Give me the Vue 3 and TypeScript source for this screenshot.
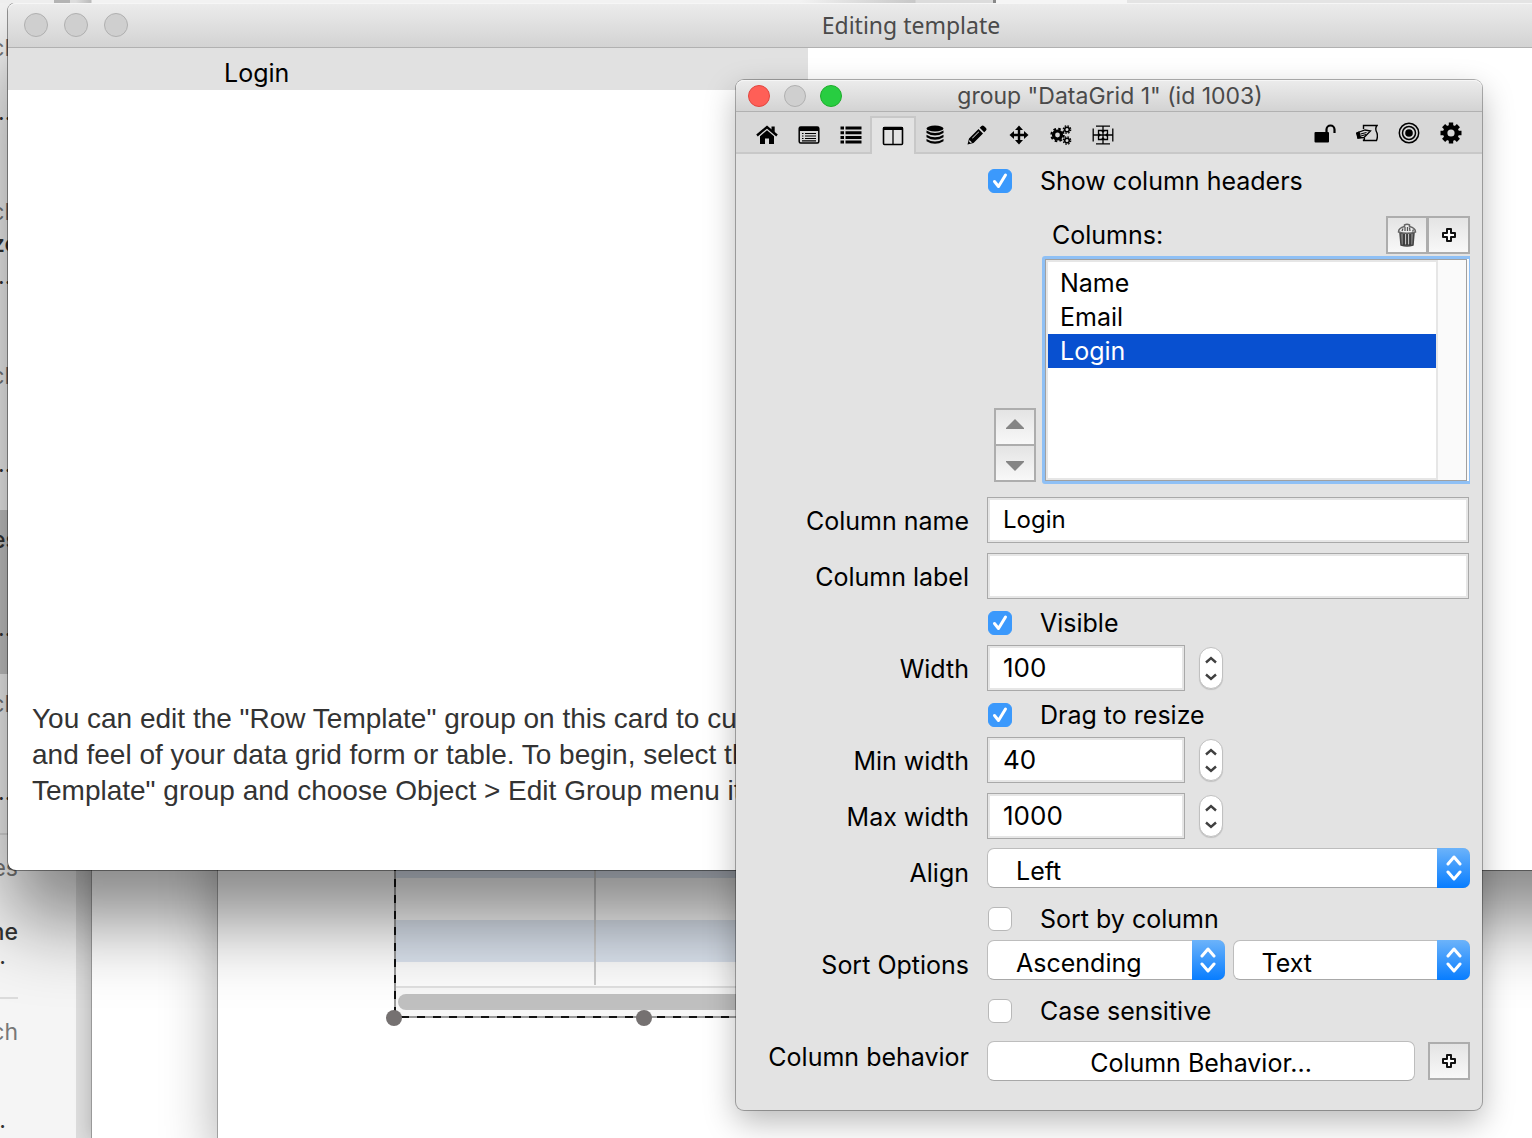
<script setup lang="ts">
import { ref } from 'vue'

interface ListItem {
  lines: string[]
  strong?: number
  selected?: boolean
}

const listItems: ListItem[] = [
  { lines: ['Research', '', '...'] },
  { lines: ['Research', 'Resize', '...'], strong: 1 },
  { lines: ['Research', '', '', '...'] },
  { lines: ['Properties', '', '', '...'], strong: 0, selected: true },
  { lines: ['Research', '', '', '...'] },
  { lines: ['Properties', '', 'Name', '... '], strong: 2 },
  { lines: ['Research', '', '', '... '] },
]

const tabs: string[] = ['home', 'card', 'list', 'columns', 'data', 'pencil', 'move', 'gears', 'geometry']
const tools: string[] = ['lock', 'script', 'target', 'gear']
const activeTab = ref('columns')

const columns = ref(['Name', 'Email', 'Login'])
const selectedColumn = ref('Login')
const showHeaders = ref(true)
const columnName = ref('Login')
const columnLabel = ref('')
const visible = ref(true)
const resizable = ref(true)
const width = ref(100)
const minWidth = ref(40)
const maxWidth = ref(1000)
const align = ref('Left')
const sortBy = ref(false)
const order = ref('Ascending')
const sortType = ref('Text')
const caseSensitive = ref(false)
</script>

<template>
  <main class="desktop">
    <div class="top-strip"></div>

    <aside class="mail-window">
      <ul class="mail-list">
        <li v-for="(item, i) in listItems" :key="i" class="mail-item" :class="{ selected: item.selected }">
          <span
            v-for="(line, j) in item.lines"
            :key="j"
            class="mail-line"
            :class="{ strong: item.strong === j, dots: line.startsWith('.'), short: line.endsWith(' ') }"
          >{{ line }}</span>
        </li>
      </ul>
    </aside>
    <div class="plain-window"></div>
    <div class="stack-window"></div>

    <section class="data-grid">
      <div class="grid-row tinted"></div>
      <div class="grid-row"></div>
      <div class="grid-row tinted"></div>
      <div class="grid-row last"></div>
      <div class="grid-scroll"><div class="grid-thumb"></div></div>
      <i class="grid-divider"></i>
      <i class="edge-left"></i>
      <i class="edge-bottom"></i>
      <i class="handle handle-a"></i>
      <i class="handle handle-b"></i>
    </section>

    <section class="template-window">
      <header class="title-bar large">
        <div class="lights">
          <i class="light"></i><i class="light"></i><i class="light"></i>
        </div>
        <h1 class="title template-title">Editing template</h1>
      </header>
      <div class="column-header">Login</div>
      <p class="hint">
        You can edit the "Row Template" group on this card to customize the look<br />
        and feel of your data grid form or table. To begin, select the "Row<br />
        Template" group and choose Object &gt; Edit Group menu item.
      </p>
    </section>

    <section class="inspector">
      <header class="title-bar">
        <div class="lights">
          <i class="light close"></i><i class="light"></i><i class="light zoom"></i>
        </div>
        <h2 class="title">group "DataGrid 1" (id 1003)</h2>
      </header>

      <nav class="toolbar">
        <div class="tabs">
          <button
            v-for="tab in tabs"
            :key="tab"
            type="button"
            class="tab"
            :class="{ active: tab === activeTab }"
            :aria-label="tab"
            @click="activeTab = tab"
          >
            <svg viewBox="0 0 22 22" class="icon">
              <g v-if="tab === 'home'">
                <path d="M1 11.500 L11 3 L21 11.500" fill="none" stroke="#000" stroke-width="2.400" />
                <path d="M15.500 2.500h3.200v6l-3.200-2.600z" />
                <path d="M4 12.200 L11 6.200 L18 12.200 V20 H13 V14.500 H9 V20 H4z" />
              </g>
              <g v-else-if="tab === 'card'">
                <rect x="1.200" y="3" width="19.600" height="16" rx="1.500" fill="none" stroke="#000" stroke-width="1.500" />
                <path d="M1 3h20v4H1z" />
                <path d="M4 9.500h1.500M4 12h1.500M4 14.500h1.500M7 9.500h11M7 12h11M7 14.500h11M4 16.800h14" stroke="#000" stroke-width="1.200" />
              </g>
              <g v-else-if="tab === 'list'">
                <path d="M.5 4h3.500M.5 8.700h3.500M.5 13.400h3.500M.5 18h3.500M5.500 4h16M5.500 8.700h16M5.500 13.400h16M5.500 18h16" stroke="#000" stroke-width="3" />
              </g>
              <g v-else-if="tab === 'columns'">
                <rect x="1.500" y="2.500" width="19" height="17" rx="1" fill="none" stroke="#000" stroke-width="1.600" />
                <path d="M1 2h20v3H1z" />
                <path d="M11 3v16" stroke="#000" stroke-width="1.300" />
              </g>
              <g v-else-if="tab === 'data'">
                <ellipse cx="11" cy="4.500" rx="8.500" ry="3" />
                <path d="M2.500 6.500q8.500 5 17 0v2.500q-8.500 5-17 0zM2.500 10.800q8.500 5 17 0v2.500q-8.500 5-17 0zM2.500 15q8.500 5 17 0v2.300q-8.500 5-17 0z" />
              </g>
              <g v-else-if="tab === 'pencil'">
                <path fill-rule="evenodd" d="M1.500 20.500 L3 14.500 L12.500 5 L17 9.500 L7.500 19z M3 17.500l1.600 1.600 1.400-.5-2.500-2.500zM6 14l6.500-6.500.6.600-6.500 6.500z" />
                <path d="M13.700 3.800 L15.500 2q1.200-1 2.400 0L20 4.100q1.200 1.200 0 2.400L18.200 8.300z" />
              </g>
              <g v-else-if="tab === 'move'">
                <path d="M11 4v14M4 11h14" stroke="#000" stroke-width="2.400" />
                <path d="M11 1.500l4 4.500H7zM11 20.500l4-4.500H7zM1.500 11L6 7v8zM20.500 11L16 7v8z" />
              </g>
              <g v-else-if="tab === 'gears'">
                <circle cx="7.500" cy="11" r="4" fill="none" stroke="#000" stroke-width="3.200" />
                <circle cx="7.500" cy="11" r="6.200" fill="none" stroke="#000" stroke-width="2" stroke-dasharray="2.600 2.270" />
                <circle cx="17" cy="5.500" r="2.300" fill="none" stroke="#000" stroke-width="1.600" />
                <circle cx="17" cy="5.500" r="3.700" fill="none" stroke="#000" stroke-width="1.300" stroke-dasharray="1.600 1.306" />
                <circle cx="17" cy="16.500" r="2.300" fill="none" stroke="#000" stroke-width="1.600" />
                <circle cx="17" cy="16.500" r="3.700" fill="none" stroke="#000" stroke-width="1.300" stroke-dasharray="1.600 1.306" />
              </g>
              <g v-else>
                <path d="M1.200 4.500v13M20.800 4.500v13M4 2.200h14M4 19.800h14M6.500 6.500h9v9h-9zM1 11h20M11 2.500v17" fill="none" stroke="#000" stroke-width="1.300" />
                <path d="M6.500 8.800v4.400l2.500-2.200zM15.500 8.800v4.400l-2.500-2.200zM8.800 6.500h4.400l-2.200 2.500zM8.800 15.500h4.400l-2.200-2.500z" />
              </g>
            </svg>
          </button>
        </div>
        <div class="tools">
          <button v-for="tool in tools" :key="tool" type="button" class="tool" :aria-label="tool">
            <svg viewBox="0 0 22 22" class="icon">
              <g v-if="tool === 'lock'">
                <rect x=".5" y="10" width="14.500" height="10.500" rx="1" />
                <path d="M12.500 11V7.500a4 4 0 0 1 8 0V11" fill="none" stroke="#000" stroke-width="2.200" />
              </g>
              <g v-else-if="tool === 'script'">
                <path d="M7.500 7V3.500H21q-2.500 3 0 7.500 1 4-.5 7.500H7q2-1 1.200-2.500" fill="none" stroke="#000" stroke-width="1.400" />
                <path d="M2 10.500l7-2.500 5.500 1-3.500 3.500-3 3-6 .5z" fill="#d8d8d8" stroke="#000" stroke-width="1.300" />
                <path d="M.5 11l2.500-1 1.500 5.500-2.500.5zM4.500 12l6-1.500M5 14l5-1.500" stroke="#000" stroke-width="1.200" />
              </g>
              <g v-else-if="tool === 'target'">
                <circle cx="11" cy="11" r="9.700" fill="none" stroke="#000" stroke-width="1.500" />
                <circle cx="11" cy="11" r="6.500" fill="none" stroke="#000" stroke-width="1.500" />
                <circle cx="11" cy="11" r="3.800" />
              </g>
              <g v-else>
                <circle cx="11" cy="11" r="5.800" fill="none" stroke="#000" stroke-width="4.400" />
                <path d="M11 .5v4M11 17.500v4M.5 11h4M17.500 11h4M3.600 3.600l3 3M15.400 15.400l3 3M3.600 18.400l3-3M15.400 6.600l3-3" stroke="#000" stroke-width="4.400" />
              </g>
            </svg>
          </button>
        </div>
      </nav>

      <form class="form" @submit.prevent>
        <div class="check-row">
          <label class="check">
            <span class="box">
              <input v-model="showHeaders" type="checkbox" />
              <svg v-if="showHeaders" viewBox="0 0 24 24"><path d="M6.500 12.500l4 5 7-11.500" /></svg>
            </span>
            Show column headers
          </label>
        </div>

        <div class="columns-block">
          <div class="arrows">
            <button type="button" class="mini" aria-label="Move up">
              <svg viewBox="0 0 18 10" class="arrow"><path d="M9 0l9 9v1H0V9z" /></svg>
            </button>
            <button type="button" class="mini" aria-label="Move down">
              <svg viewBox="0 0 18 10" class="arrow"><path d="M9 10l9-9V0H0v1z" /></svg>
            </button>
          </div>
          <div class="columns-main">
            <div class="columns-head">
              <label for="columns">Columns:</label>
              <div class="pair">
                <button type="button" class="mini" aria-label="Delete column">
                  <svg viewBox="0 0 20 24" class="trash">
                    <path d="M3 10h14l-1 12q-6 2-12 0z" fill="#777" stroke="#444" stroke-width="1.500" />
                    <path d="M7 11v11M10 11v11M13 11v11" stroke="#222" stroke-width="1.300" />
                    <path d="M8.600 11v10M11.600 11v10" stroke="#ccc" />
                    <path d="M1.500 9q0-4 6-5.500V2q2.500-1.500 5 0v1.500q6 1.500 6 5.500-8.500 2.500-17 0z" fill="#eee" stroke="#666" stroke-width="1.500" />
                    <path d="M8 8V4M10.500 8V4M13 8l-.5-3.500M5 8l1-2.500M15.500 8.500l1-2" stroke="#555" stroke-width="1.300" />
                  </svg>
                </button>
                <button type="button" class="mini" aria-label="Add column">
                  <svg viewBox="0 0 14 14" class="plus"><path d="M5 1h4v4h4v4H9v4H5V9H1V5h4z" /></svg>
                </button>
              </div>
            </div>
            <div class="list-frame">
              <select id="columns" v-model="selectedColumn" class="column-list" size="6">
                <option v-for="c in columns" :key="c" :value="c">{{ c }}</option>
              </select>
              <div class="list-track"></div>
            </div>
          </div>
        </div>

        <div class="row spaced">
          <label for="col-name">Column name</label>
          <input id="col-name" v-model="columnName" class="field" type="text" />
        </div>
        <div class="row">
          <label for="col-label">Column label</label>
          <input id="col-label" v-model="columnLabel" class="field" type="text" />
        </div>
        <div class="check-row">
          <label class="check">
            <span class="box">
              <input v-model="visible" type="checkbox" />
              <svg v-if="visible" viewBox="0 0 24 24"><path d="M6.500 12.500l4 5 7-11.500" /></svg>
            </span>
            Visible
          </label>
        </div>
        <div class="row">
          <label for="width">Width</label>
          <div class="number">
            <input id="width" v-model="width" class="field" type="text" />
            <span class="stepper">
              <button type="button" aria-label="Increase width" @click="width++"><svg viewBox="0 0 12 8"><path d="M1 6.500l5-4.500 5 4.500" /></svg></button>
              <button type="button" aria-label="Decrease width" @click="width--"><svg viewBox="0 0 12 8"><path d="M1 1.500l5 4.500 5-4.500" /></svg></button>
            </span>
          </div>
        </div>
        <div class="check-row">
          <label class="check">
            <span class="box">
              <input v-model="resizable" type="checkbox" />
              <svg v-if="resizable" viewBox="0 0 24 24"><path d="M6.500 12.500l4 5 7-11.500" /></svg>
            </span>
            Drag to resize
          </label>
        </div>
        <div class="row spaced">
          <label for="min-width">Min width</label>
          <div class="number">
            <input id="min-width" v-model="minWidth" class="field" type="text" />
            <span class="stepper">
              <button type="button" aria-label="Increase min width" @click="minWidth++"><svg viewBox="0 0 12 8"><path d="M1 6.500l5-4.500 5 4.500" /></svg></button>
              <button type="button" aria-label="Decrease min width" @click="minWidth--"><svg viewBox="0 0 12 8"><path d="M1 1.500l5 4.500 5-4.500" /></svg></button>
            </span>
          </div>
        </div>
        <div class="row before-menu">
          <label for="max-width">Max width</label>
          <div class="number">
            <input id="max-width" v-model="maxWidth" class="field" type="text" />
            <span class="stepper">
              <button type="button" aria-label="Increase max width" @click="maxWidth++"><svg viewBox="0 0 12 8"><path d="M1 6.500l5-4.500 5 4.500" /></svg></button>
              <button type="button" aria-label="Decrease max width" @click="maxWidth--"><svg viewBox="0 0 12 8"><path d="M1 1.500l5 4.500 5-4.500" /></svg></button>
            </span>
          </div>
        </div>
        <div class="row menus">
          <label for="align">Align</label>
          <div class="menu-group">
            <span class="menu">
              <select id="align" v-model="align"><option>Left</option><option>Center</option><option>Right</option></select>
              <span class="cap"><svg viewBox="0 0 16 26"><path d="M2 9l6-7 6 7M2 17l6 7 6-7" /></svg></span>
            </span>
          </div>
        </div>
        <div class="check-row low">
          <label class="check">
            <span class="box"><input v-model="sortBy" type="checkbox" /></span>
            Sort by column
          </label>
        </div>
        <div class="row menus">
          <label for="order">Sort Options</label>
          <div class="menu-group">
            <span class="menu">
              <select id="order" v-model="order"><option>Ascending</option><option>Descending</option></select>
              <span class="cap"><svg viewBox="0 0 16 26"><path d="M2 9l6-7 6 7M2 17l6 7 6-7" /></svg></span>
            </span>
            <span class="menu">
              <select v-model="sortType" aria-label="Sort type"><option>Text</option><option>Numeric</option></select>
              <span class="cap"><svg viewBox="0 0 16 26"><path d="M2 9l6-7 6 7M2 17l6 7 6-7" /></svg></span>
            </span>
          </div>
        </div>
        <div class="check-row low">
          <label class="check">
            <span class="box"><input v-model="caseSensitive" type="checkbox" /></span>
            Case sensitive
          </label>
        </div>
        <div class="row behavior">
          <label for="behavior">Column behavior</label>
          <div class="behavior-group">
            <button id="behavior" type="button" class="push">Column Behavior...</button>
            <button type="button" class="mini" aria-label="Add behavior">
              <svg viewBox="0 0 14 14" class="plus"><path d="M5 1h4v4h4v4H9v4H5V9H1V5h4z" /></svg>
            </button>
          </div>
        </div>
      </form>
    </section>
  </main>
</template>

<style>
body {
  margin: 0;
}
</style>

<style scoped>
* {
  box-sizing: border-box;
}
.desktop {
  position: relative;
  height: 100vh;
  min-height: 1138px;
  overflow: hidden;
  background: #fff;
  color: #000;
  font-family: Inter, "Liberation Sans", sans-serif;
  font-size: 25px;
  line-height: 32px;
}
button,
input,
select {
  margin: 0;
  padding: 0;
  border: 0;
  color: inherit;
  font: inherit;
}

/* windows behind */
.mail-window,
.plain-window,
.stack-window {
  position: absolute;
  top: 0;
  bottom: 0;
}
.mail-window {
  left: 0;
  width: 92px;
  overflow: hidden;
  background: #f5f5f5;
  border-right: 16px solid #dcdcdc;
}
.plain-window {
  left: 91px;
  right: 0;
  background: #fff;
  border-left: 1px solid #999;
  box-shadow: 0 0 16px rgba(0, 0, 0, 0.2);
}
.stack-window {
  left: 217px;
  right: 0;
  background: #fff;
  border-left: 1px solid #a0a0a0;
  box-shadow: 0 24px 52px rgba(0, 0, 0, 0.32);
}
.top-strip {
  position: absolute;
  z-index: 1;
  top: 0;
  left: 0;
  right: 0;
  height: 3px;
  background: linear-gradient(
    90deg,
    #eee 54px,
    #b4b4b4 54px 70px,
    #ddd 70px 76px,
    #bbb 91px,
    #f2f2f2 92px 800px,
    #c8c8c8 915px,
    #dcdcdc 916px 993px,
    #888 993px 996px,
    #f5f5f5 996px 1127px,
    #e4e4e4 1127px
  );
}
.mail-list {
  margin: 0;
  padding: 13px 0 0;
  list-style: none;
}
.mail-item {
  display: flex;
  flex-direction: column;
  width: 18px;
  height: 164px;
  padding-top: 17px;
  border-top: 2px solid #dcdcdc;
  color: #777;
}
.mail-item:nth-child(-n + 5) {
  border-color: transparent;
}
.mail-item:nth-child(3) {
  height: 169px;
}
.mail-item:nth-child(5) {
  height: 159px;
  padding-top: 12px;
}
.mail-item.selected {
  padding-top: 12px;
  border-color: #c8c8c8;
  background: #c8c8c8;
}
.mail-line {
  display: flex;
  justify-content: flex-end;
  flex: none;
  height: 32px;
  font-size: 23px;
}
.mail-line:nth-child(4) {
  margin-top: -8px;
}
.mail-line.strong {
  color: #333;
  font-weight: 500;
}
.mail-line.dots {
  color: #333;
}
.mail-line.short {
  padding-right: 12px;
}

/* data grid */
.data-grid {
  position: absolute;
  left: 394px;
  top: 836px;
  width: 500px;
  padding-left: 2px;
}
.grid-row {
  height: 42px;
  background: #fcfcfc;
}
.grid-row.tinted {
  background: #dce4ef;
}
.grid-row.last {
  height: 24px;
}
.grid-scroll {
  height: 32px;
  padding: 6px 2px;
  border-top: 2px solid #e0e0e0;
  background: #f7f7f7;
}
.grid-thumb {
  height: 16px;
  border-radius: 8px;
  background: #c0c0c0;
}
.grid-divider,
.edge-left,
.edge-bottom,
.handle {
  position: absolute;
}
.grid-divider {
  left: 200px;
  top: 0;
  bottom: 33px;
  width: 2px;
  background: #ccc;
}
.edge-left {
  left: 0;
  top: 0;
  bottom: 0;
  width: 2px;
  background: repeating-linear-gradient(0deg, #999 0 3px, #111 3px 11px, #999 11px 16px);
}
.edge-bottom {
  left: 0;
  right: 0;
  bottom: 0;
  height: 2px;
  background: repeating-linear-gradient(90deg, #999 0 7px, #111 7px 15px, #999 15px 16px);
}
.handle {
  bottom: -8px;
  width: 16px;
  height: 16px;
  border-radius: 50%;
  background: #757171;
}
.handle-a {
  left: -8px;
}
.handle-b {
  left: 242px;
}

/* window chrome */
.title-bar {
  position: relative;
  display: flex;
  align-items: center;
  height: 32px;
  padding-left: 12px;
  border-bottom: 1px solid #b1b1b1;
  border-radius: 8px 8px 0 0;
  background: linear-gradient(#ececec, #d3d3d3);
  box-shadow: inset 0 1px #f6f6f6;
}
.title-bar.large {
  height: 45px;
  padding-left: 16px;
}
.title {
  flex: 1;
  margin: 0 104px 0 0;
  text-align: center;
  font-size: 23px;
  font-weight: 400;
  color: #4a4a4a;
}
.template-title {
  margin-right: 120px;
  font-family: "Noto Sans", "Open Sans", sans-serif;
}
.lights {
  display: flex;
  gap: 14px;
}
.large .lights {
  gap: 16px;
}
.light {
  width: 22px;
  height: 22px;
  border: 1px solid #b0b0b0;
  border-radius: 50%;
  background: #cfcfcf;
}
.large .light {
  width: 24px;
  height: 24px;
}
.light.close {
  border-color: #e2463f;
  background: #ff5f57;
}
.light.zoom {
  border-color: #1dad2b;
  background: #28cd41;
}

.template-window {
  position: absolute;
  left: 8px;
  right: -282px;
  top: 3px;
  height: 867px;
  border-radius: 8px;
  background: #fff;
  box-shadow: 0 0 0 1px rgba(0, 0, 0, 0.4), 0 50px 80px rgba(0, 0, 0, 0.48);
}
.column-header {
  width: 800px;
  height: 42px;
  padding: 9px 0 0 216px;
  background: #e1e1e1;
}
.hint {
  margin: 611px 0 0 24px;
  color: #333;
  font-family: "Liberation Sans", Arial, sans-serif;
  font-size: 28px;
  line-height: 36px;
  white-space: nowrap;
}

/* inspector */
.inspector {
  position: absolute;
  left: 736px;
  top: 80px;
  width: 746px;
  padding-bottom: 29px;
  border-radius: 8px;
  background: #e3e3e3;
  box-shadow: 0 0 0 1px rgba(0, 0, 0, 0.3), 0 12px 32px rgba(0, 0, 0, 0.28);
}
.toolbar {
  display: flex;
  justify-content: space-between;
  height: 42px;
  padding: 4px 10px 0;
  background: #d8d8d8;
  box-shadow: inset 0 -2px #c8c8c8;
}
.tabs,
.tools {
  display: flex;
}
.tab,
.tool {
  display: grid;
  place-items: center;
  width: 42px;
  height: 38px;
  background: none;
}
.tool {
  height: 34px;
}
.tab.active {
  width: 46px;
  margin: 0 -2px;
  border: solid #c8c8c8;
  border-width: 2px 2px 0;
  background: #e3e3e3;
}
.icon {
  width: 22px;
  height: 22px;
}
.form {
  padding: 4px 12px 0 16px;
}
.check-row {
  display: flex;
  align-items: center;
  height: 46px;
  padding-left: 236px;
}
.check-row.low {
  padding-top: 4px;
}
.check {
  display: flex;
  align-items: center;
  gap: 28px;
}
.box {
  position: relative;
  width: 24px;
  height: 24px;
}
.box input {
  display: block;
  width: 24px;
  height: 24px;
  appearance: none;
  border: 1px solid #b8b8b8;
  border-radius: 6px;
  background: #fff;
}
.box input:checked {
  border-color: #3b99fc;
  background: #3b99fc;
}
.box svg {
  position: absolute;
  inset: 0;
  fill: none;
  stroke: #fff;
  stroke-width: 3;
  stroke-linecap: round;
  stroke-linejoin: round;
  pointer-events: none;
}
.columns-block {
  display: flex;
  align-items: flex-end;
  gap: 6px;
  margin: 12px 0 14px;
  padding-left: 242px;
}
.columns-main {
  flex: 1;
}
.columns-head {
  display: flex;
  align-items: center;
  justify-content: space-between;
  padding-left: 10px;
}
.pair {
  display: flex;
}
.mini {
  display: grid;
  place-items: center;
  flex: none;
  width: 42px;
  height: 38px;
  border: 2px solid #adadad;
  background: linear-gradient(#e4e4e4, #f8f8f8);
}
.pair .mini + .mini {
  border-left-width: 1px;
}
.arrows {
  display: flex;
  flex-direction: column;
  padding-bottom: 2px;
}
.arrows .mini {
  padding-bottom: 6px;
}
.arrows .mini + .mini {
  margin-top: -2px;
  padding: 6px 0 0;
}
.arrow {
  width: 18px;
  height: 10px;
  fill: #858585;
}
.trash {
  width: 20px;
  height: 24px;
}
.plus {
  width: 14px;
  height: 14px;
  fill: #fff;
  stroke: #111;
  stroke-width: 2;
  stroke-linejoin: round;
}
.list-frame {
  display: flex;
  height: 228px;
  margin-top: 2px;
  border: 3px solid #8fc0f5;
  border-right-width: 1px;
  border-radius: 3px 0 0 3px;
  outline: 1px solid #a0a0a0;
  outline-offset: -4px;
  background: #fff;
}
.column-list {
  flex: 1;
  margin: 1px 0 1px 1px;
  padding: 4px 0 0;
  overflow: hidden;
  border: 2px solid #e6e6e6;
  border-right: 0;
  border-radius: 0;
  outline: none;
  background: #fff;
  font-size: 25px;
}
.column-list option {
  height: 34px;
  padding: 2px 0 0 12px;
  line-height: 34px;
}
.column-list option:checked {
  background: #0850d0 linear-gradient(#0850d0, #0850d0);
  color: #fff;
}
.list-track {
  width: 33px;
  margin: 1px 0;
  border-left: 2px solid #e6e6e6;
  background: #fafafa;
}
.row {
  display: grid;
  grid-template-columns: 217px 1fr;
  column-gap: 18px;
  align-items: center;
  height: 46px;
}
.row > label {
  text-align: right;
}
.row > .field,
.number {
  margin-top: -2px;
}
.spaced {
  margin-bottom: 10px;
}
.before-menu {
  margin-bottom: 8px;
}
.field {
  width: 482px;
  height: 46px;
  padding: 0 15px 2px;
  border: 1px solid #a9a9a9;
  border-radius: 0;
  outline: none;
  background: #fff;
  box-shadow: inset 0 0 0 2px #e6e6e6;
  font-size: 24px;
}
.number {
  display: flex;
  align-items: center;
  gap: 14px;
}
.number .field {
  width: 198px;
  font-size: 26px;
}
.stepper {
  display: flex;
  flex-direction: column;
  justify-content: center;
  width: 24px;
  height: 42px;
  border: 1px solid #c0c0c0;
  border-radius: 12px;
  background: #fff;
  box-shadow: 0 1px 1px rgba(0, 0, 0, 0.15);
}
.stepper button {
  display: grid;
  place-items: center;
  height: 17px;
  background: none;
}
.stepper svg {
  width: 12px;
  height: 8px;
  fill: none;
  stroke: #404040;
  stroke-width: 2.400;
}
.menus {
  align-items: start;
}
.menus > label {
  padding-top: 9px;
}
.menu-group {
  display: flex;
  gap: 8px;
}
.menu {
  position: relative;
  flex: 1;
  height: 40px;
}
.menu select {
  width: 100%;
  height: 40px;
  padding: 6px 40px 0 28px;
  appearance: none;
  border: 1px solid #bdbdbd;
  border-bottom-color: #a8a8a8;
  border-radius: 7px;
  background: #fff;
}
.cap {
  position: absolute;
  top: 0;
  right: 0;
  display: grid;
  place-items: center;
  width: 33px;
  height: 40px;
  border-radius: 0 7px 7px 0;
  background: linear-gradient(#6cb3fa, #087dff);
  pointer-events: none;
}
.cap svg {
  width: 16px;
  height: 26px;
  fill: none;
  stroke: #fff;
  stroke-width: 3;
  stroke-linecap: round;
  stroke-linejoin: round;
}
.behavior {
  align-items: start;
  height: 40px;
  margin-top: 9px;
}
.behavior-group {
  display: flex;
  align-items: center;
  gap: 13px;
}
.push {
  flex: 1;
  height: 40px;
  padding-top: 4px;
  border: 1px solid #bdbdbd;
  border-bottom-color: #a8a8a8;
  border-radius: 7px;
  background: #fff;
}
</style>
